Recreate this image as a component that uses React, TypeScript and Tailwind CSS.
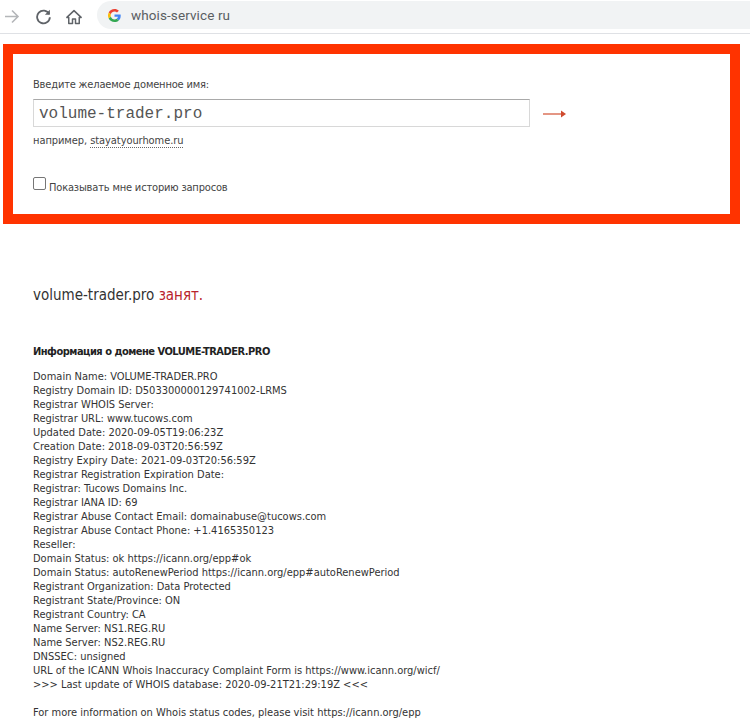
import React from "react";

const whois = [
  "Domain Name: VOLUME-TRADER.PRO",
  "Registry Domain ID: D503300000129741002-LRMS",
  "Registrar WHOIS Server:",
  "Registrar URL: www.tucows.com",
  "Updated Date: 2020-09-05T19:06:23Z",
  "Creation Date: 2018-09-03T20:56:59Z",
  "Registry Expiry Date: 2021-09-03T20:56:59Z",
  "Registrar Registration Expiration Date:",
  "Registrar: Tucows Domains Inc.",
  "Registrar IANA ID: 69",
  "Registrar Abuse Contact Email: domainabuse@tucows.com",
  "Registrar Abuse Contact Phone: +1.4165350123",
  "Reseller:",
  "Domain Status: ok https://icann.org/epp#ok",
  "Domain Status: autoRenewPeriod https://icann.org/epp#autoRenewPeriod",
  "Registrant Organization: Data Protected",
  "Registrant State/Province: ON",
  "Registrant Country: CA",
  "Name Server: NS1.REG.RU",
  "Name Server: NS2.REG.RU",
  "DNSSEC: unsigned",
  "URL of the ICANN Whois Inaccuracy Complaint Form is https://www.icann.org/wicf/",
  ">>> Last update of WHOIS database: 2020-09-21T21:29:19Z <<<",
  "",
  "For more information on Whois status codes, please visit https://icann.org/epp",
];

const App = () => {
  return (
    <div className="w-[750px] h-[723px] overflow-hidden bg-white text-[#333] font-['DejaVu_Sans_Condensed','Liberation_Sans',sans-serif]">
      {/* browser toolbar */}
      <div className="h-[34px] flex items-center border-b border-[#dfe1e5] pl-[3px]">
        <svg width="17" height="17" viewBox="0 0 17 17" fill="none" stroke="#b4b6b9" strokeWidth="1.6">
          <path d="M2 8.5h13M9 2.5l6 6-6 6" />
        </svg>
        <svg className="ml-[15px]" width="17" height="17" viewBox="0 0 24 24" fill="none" stroke="#5f6368" strokeWidth="2.6">
          <path d="M20 8.5A9 9 0 1 0 21 13" />
          <path d="M21 2.5v7h-7" fill="#5f6368" strokeWidth="0" />
        </svg>
        <svg className="ml-[13px]" width="18" height="18" viewBox="0 0 24 24" fill="none" stroke="#5f6368" strokeWidth="2" strokeLinejoin="round">
          <path d="M10 20.500v-6h4v6h5v-8h2.500L12 3.500 2.500 12.500H5v8z" />
        </svg>
        <div className="ml-[14px] flex-1 h-[28px] rounded-l-[14px] bg-[#f1f3f4] flex items-center pl-[11px] -mt-[3px]">
          <svg width="13" height="13" viewBox="0 0 48 48">
            <path fill="#EA4335" d="M24 9.500c3.500 0 6.700 1.200 9.200 3.600l6.900-6.900C35.900 2.400 30.500 0 24 0 14.600 0 6.500 5.400 2.600 13.200l8 6.200C12.500 13.700 17.800 9.500 24 9.500z" />
            <path fill="#4285F4" d="M46.900 24.500c0-1.600-.1-3.100-.4-4.500H24v9h12.900c-.6 3-2.200 5.500-4.700 7.200l7.700 6c4.500-4.200 7-10.300 7-17.700z" />
            <path fill="#FBBC05" d="M10.600 28.600c-.5-1.400-.8-3-.8-4.600s.3-3.200.8-4.600l-8-6.200C.9 16.500 0 20.100 0 24s.9 7.500 2.600 10.800l8-6.200z" />
            <path fill="#34A853" d="M24 48c6.500 0 11.900-2.100 15.900-5.800l-7.700-6c-2.200 1.400-4.900 2.300-8.200 2.300-6.200 0-11.500-4.200-13.400-9.900l-8 6.200C6.500 42.600 14.600 48 24 48z" />
          </svg>
          <span className="ml-[10px] text-[13.500px] tracking-[0.1px] text-[#5a5e62] font-['Roboto',sans-serif]">whois-service ru</span>
        </div>
      </div>

      {/* search form */}
      <div className="mt-[10px] ml-[3px] w-[737px] h-[180px] border-[10px] border-[#ff3300] pl-[20px] pt-[24px] text-[11px] leading-[14px] tracking-[-0.17px] text-[#444]">
        <p>Введите желаемое доменное имя:</p>
        <div className="mt-[7px] flex items-center">
          <div className="w-[497px] h-[28px] border border-[#d8d8d8] border-t-[#a9a9a9] flex items-center pl-[5px] pt-[2px] font-['Liberation_Mono',monospace] text-[16px] tracking-normal text-[#555]">
            volume-trader.pro
          </div>
          <svg className="ml-[13px] mt-[2px]" width="24" height="10" viewBox="0 0 24 10" fill="none">
            <path d="M0 5h21" stroke="#d9694f" strokeWidth="1.4" />
            <path d="M18 1.500 23 5l-5 3.500z" fill="#cf4a2e" />
          </svg>
        </div>
        <p className="mt-[7px] tracking-[-0.07px]">
          например, <span className="border-b border-dotted border-[#666]">stayatyourhome.ru</span>
        </p>
        <label className="mt-[29px] flex items-start">
          <span className="w-[13px] h-[13px] rounded-[2px] border border-[#767676] bg-white" />
          <span className="ml-[3px] mt-[4px]">Показывать мне историю запросов</span>
        </label>
      </div>

      {/* result */}
      <p className="mt-[62px] ml-[33px] text-[15px] leading-[18px] text-[#333]">
        volume-trader.pro <span className="text-[#b8232c]">занят.</span>
      </p>
      <p className="mt-[41px] ml-[33px] text-[11px] leading-[14px] font-bold tracking-[-0.5px] text-[#222]">
        Информация о домене VOLUME-TRADER.PRO
      </p>
      <div className="mt-[11px] ml-[33px] text-[11px] leading-[14px] text-[#333]">
        {whois.map((line, index) => (
          <div key={index} className="h-[14px] whitespace-pre">
            {line}
          </div>
        ))}
      </div>
    </div>
  );
};

export default App;
